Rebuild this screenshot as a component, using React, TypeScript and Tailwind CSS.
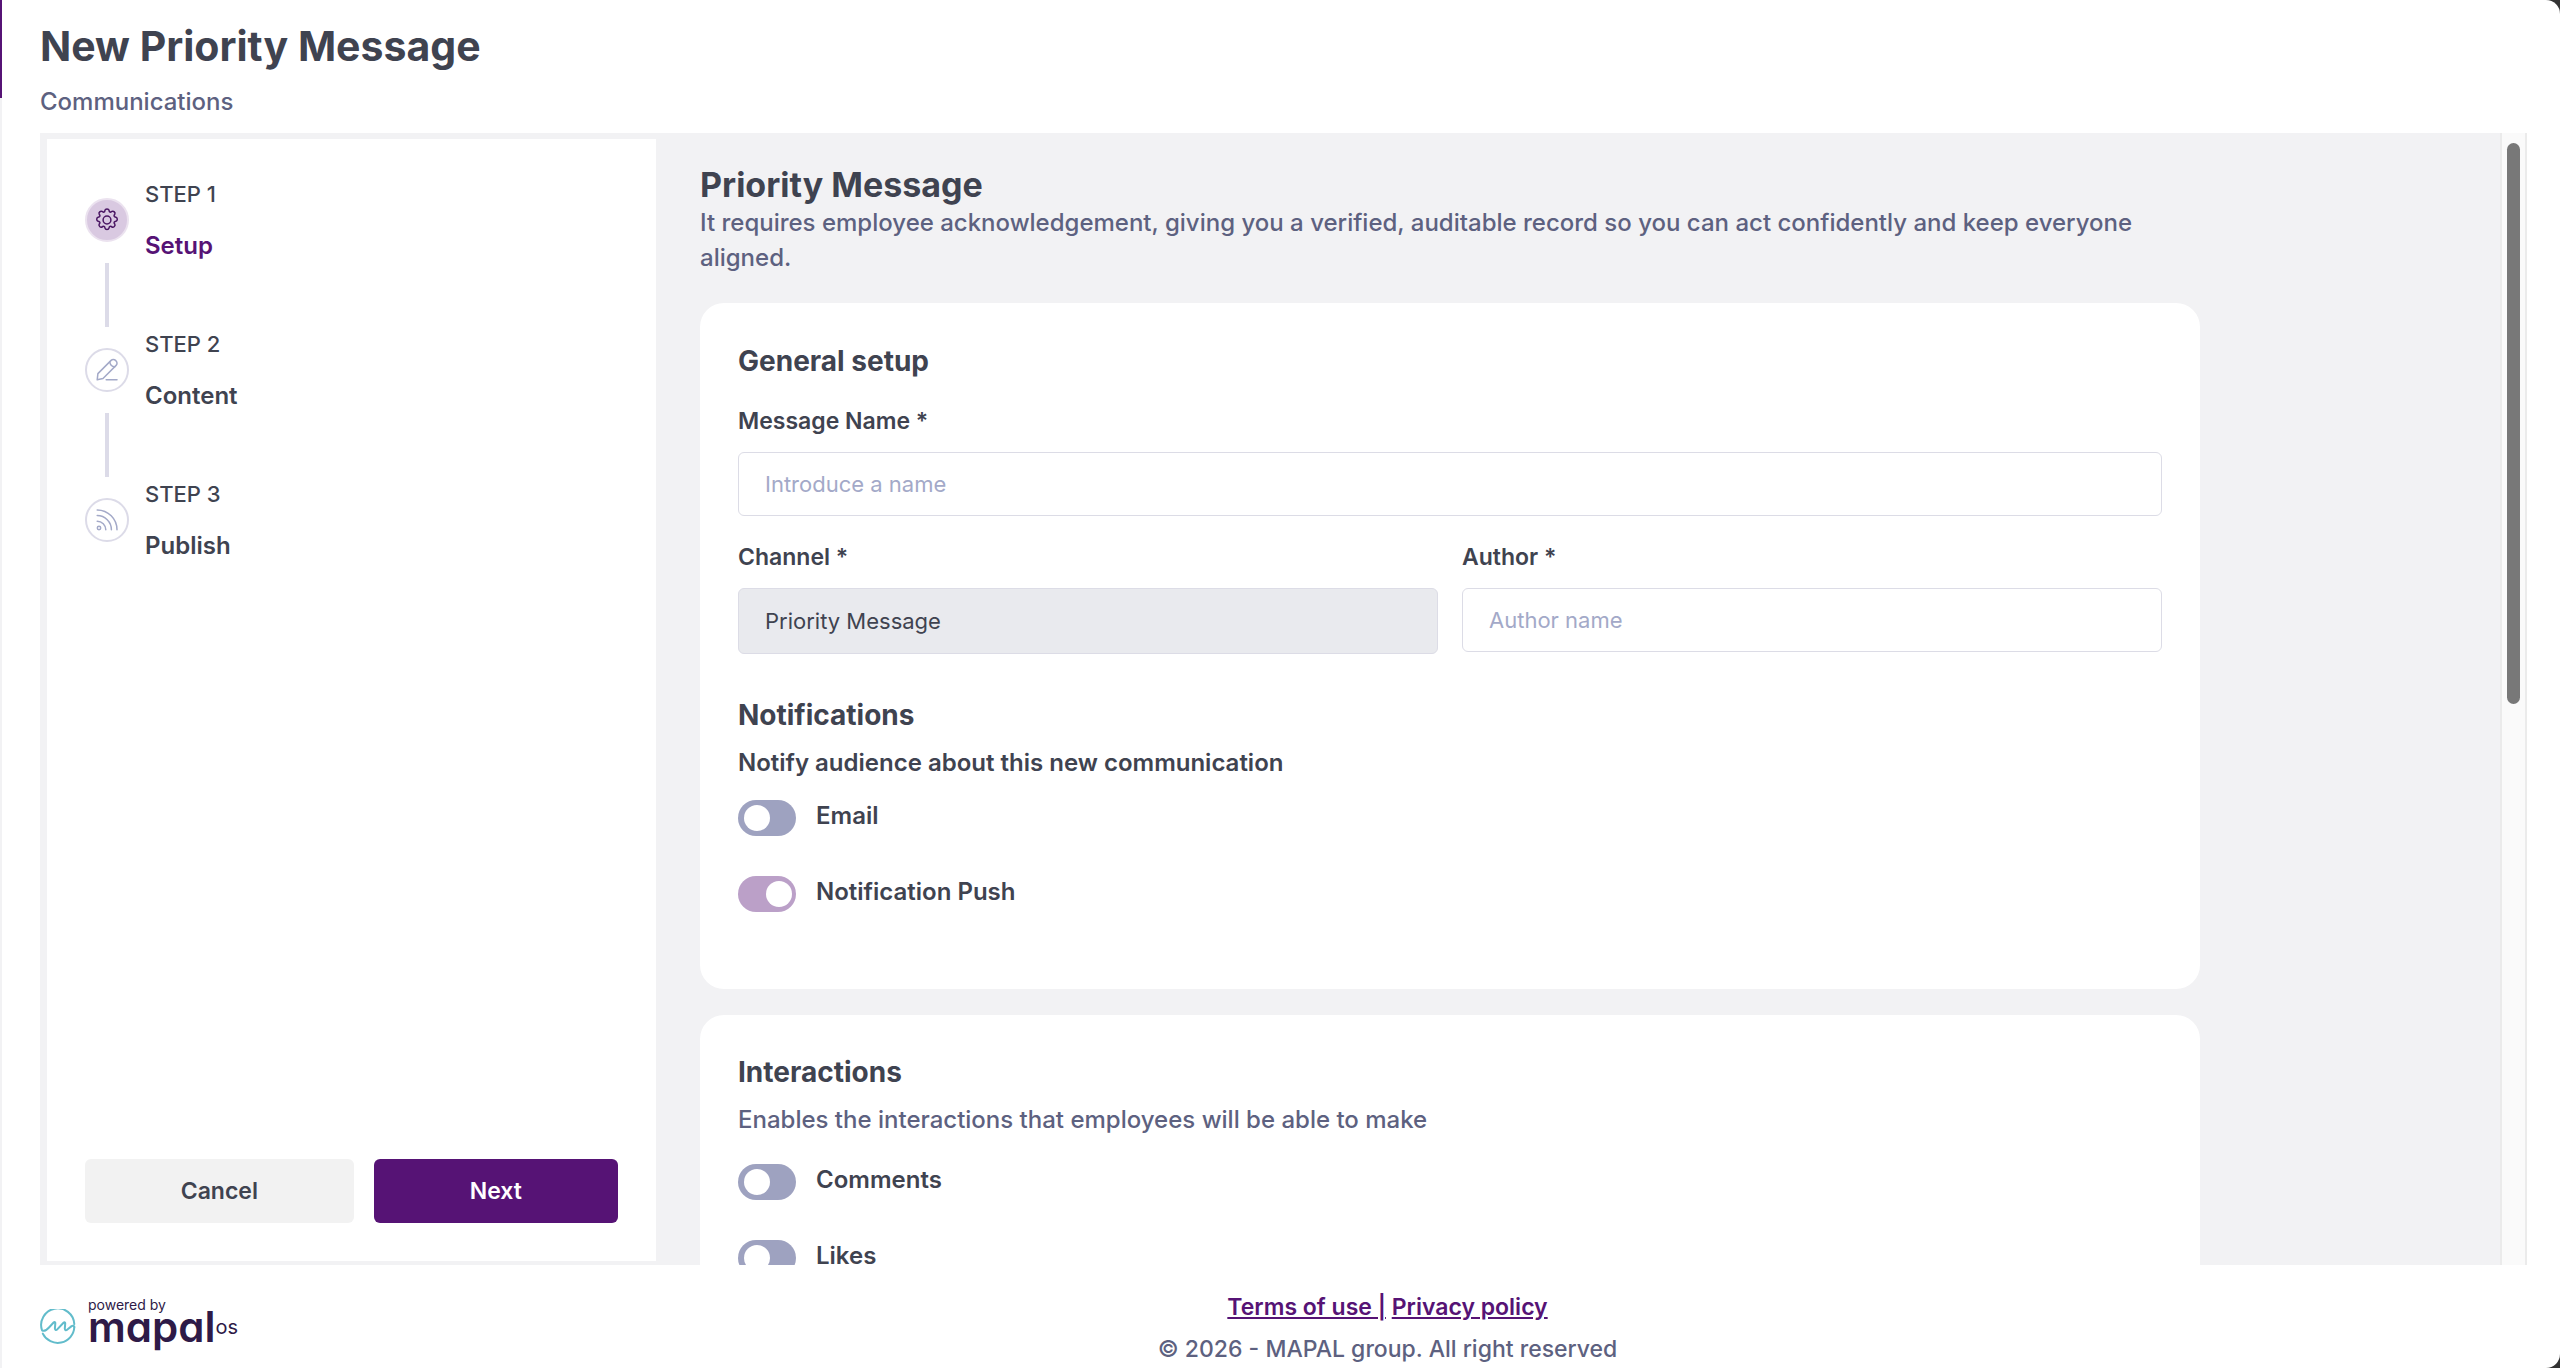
import type { ReactNode } from "react";

function GearIcon() {
  return (
    <svg viewBox="0 0 24 24" className="size-6" fill="none" stroke="#4a1663" strokeWidth="1.5" strokeLinejoin="round" aria-hidden="true">
      <path d="M10 2.2C10.4.5 13.6.5 14 2.2l.2.9c.2.9 1.200 1.300 2 .8l.8-.5c1.500-.9 3.700 1.300 2.800 2.800l-.5.8c-.5.800-.1 1.800.8 2l.9.2c1.700.4 1.700 3.600 0 4l-.9.200c-.9.200-1.300 1.200-.8 2l.5.8c.9 1.500-1.300 3.700-2.800 2.800l-.8-.5c-.8-.5-1.800-.1-2 .8l-.2.9c-.4 1.700-3.600 1.700-4 0l-.2-.9c-.2-.9-1.200-1.300-2-.8l-.8.5c-1.500.9-3.700-1.300-2.800-2.800l.5-.8c.5-.8.1-1.800-.8-2l-.9-.2c-1.700-.4-1.700-3.600 0-4l.9-.2c.9-.2 1.300-1.200.8-2l-.5-.8C3.300 4.700 5.500 2.500 7 3.400l.8.5c.8.5 1.800.1 2-.8z" />
      <circle cx="12" cy="12" r="3.900" />
    </svg>
  );
}

function PencilIcon() {
  return (
    <svg viewBox="0 0 24 24" className="size-6" fill="none" stroke="#a3a9c8" strokeWidth="1.5" strokeLinecap="round" strokeLinejoin="round" aria-hidden="true">
      <path d="M2.200 21.800l.7-6.200L16.100 2.400a3.100 3.100 0 0 1 4.400 0l.6.600a3.100 3.100 0 0 1 0 4.400L8 20.500z" />
      <path d="M14.800 3.800c.2 2.900 2 4.700 4.900 5" />
      <path d="M11.200 21.800H22" />
    </svg>
  );
}

function FeedIcon() {
  return (
    <svg viewBox="0 0 24 24" className="size-6" fill="none" stroke="#a3a9c8" strokeWidth="1.5" strokeLinecap="round" aria-hidden="true">
      <circle cx="4" cy="20" r="1.700" />
      <path d="M2.200 13.200a8.600 8.600 0 0 1 8.600 8.600" />
      <path d="M2.200 7.600a14.200 14.200 0 0 1 14.200 14.200" />
      <path d="M2.200 2A19.800 19.800 0 0 1 22 21.800" />
    </svg>
  );
}

function Step({ label, title, icon, active, last }: { label: string; title: string; icon: ReactNode; active?: boolean; last?: boolean }) {
  return (
    <li className="flex h-[150px] gap-4" aria-current={active ? "step" : undefined}>
      <div className="flex w-11 flex-col items-center pt-5">
        <span className={active ? "flex size-11 items-center justify-center rounded-full border-2 border-[#ebe2ef] bg-[#d9c9e1]" : "flex size-11 items-center justify-center rounded-full border-2 border-[#dcdbe8]"}>
          {icon}
        </span>
        {!last && <span className="mt-[21px] h-16 w-1 bg-[#dcdbe8]" />}
      </div>
      <div className="flex flex-col gap-5">
        <span className="text-[22px] leading-8 font-medium">{label}</span>
        <span className={active ? "text-2xl leading-8 font-semibold text-[#561375]" : "text-2xl leading-8 font-semibold"}>{title}</span>
      </div>
    </li>
  );
}

function Field({ id, label, placeholder, value }: { id: string; label: string; placeholder?: string; value?: string }) {
  return (
    <div className="flex flex-col gap-[15px]">
      <label htmlFor={id} className="text-[23px] leading-8 font-semibold">
        {label}
      </label>
      {value ? (
        <input id={id} type="text" defaultValue={value} disabled className="h-[66px] w-full rounded-md border border-[#dcdce6] bg-[#e9eaee] px-[26px] text-[22px] text-[#3f4350]" />
      ) : (
        <input id={id} type="text" placeholder={placeholder} className="h-16 w-full rounded-md border border-[#dcdce6] bg-white px-[26px] text-[22px] placeholder:text-[#a3a9c8]" />
      )}
    </div>
  );
}

function Toggle({ id, label, on }: { id: string; label: string; on?: boolean }) {
  return (
    <div className="flex h-9 items-start gap-5">
      <input
        id={id}
        type="checkbox"
        role="switch"
        defaultChecked={on}
        disabled={on}
        className="flex h-9 w-[58px] shrink-0 appearance-none items-center rounded-full bg-[#9ea2c0] px-1.5 before:block before:size-[26px] before:rounded-full before:bg-white checked:justify-end checked:bg-[#bba0c8] checked:px-1"
      />
      <label htmlFor={id} className="text-2xl leading-8 font-semibold">
        {label}
      </label>
    </div>
  );
}

function Logo() {
  return (
    <div className="flex w-[208px] shrink-0 items-start gap-3 text-[#2e1a47]">
      <svg viewBox="0 0 36 36" className="mt-11 size-9 shrink-0" fill="none" stroke="#62bccb" strokeWidth="2" strokeLinecap="round" strokeLinejoin="round" aria-hidden="true">
        <path d="M34.300 15A16.600 16.600 0 1 0 2 21.300c2.500 1.600 5-.6 7-2.800l4.600-5c1-1 1.900-.5 1.700.8l-.4 5c0 2 1.300 2.200 2.600.8l6-6.300c1-1 1.900-.5 1.700.8l-.4 5c0 2 1.300 2.100 2.600.9l4.200-3.400c1.200-.8 2.600-.6 2.700.9" />
        <path d="M34.300 18A16.600 16.600 0 0 1 2.800 24.600" />
      </svg>
      <div className="flex flex-col pt-8">
        <span className="text-sm leading-4">powered by</span>
        <span className="flex items-start">
          <span className="text-[42px] leading-7 font-semibold [font-feature-settings:'cv11']">mapal</span>
          <span className="pt-0.5 text-xl leading-6">os</span>
        </span>
      </div>
    </div>
  );
}

export default function App() {
  return (
    <div className="bg-[#333333] font-['Inter',sans-serif] text-[#3f4350]">
      <div className="flex h-screen flex-col overflow-hidden rounded-r-[14px] bg-white">
        <div className="flex min-h-0 flex-1">
          <div className="flex w-0.5 shrink-0 flex-col bg-[#f2f2f4]">
            <span className="h-[98px] bg-[#561375]" />
          </div>
          <div className="flex min-w-0 flex-1 flex-col pr-[33px] pl-[38px]">
            <header className="pt-[22px] pb-[15px]">
              <h1 className="text-[41px] leading-[48px] font-bold">New Priority Message</h1>
              <p className="mt-4 text-2xl leading-8 font-medium text-[#5d6180]">Communications</p>
            </header>

            <div className="flex min-h-0 flex-1 bg-[#f2f2f4]">
              <aside className="mt-1.5 mb-1 ml-[7px] flex w-[609px] shrink-0 flex-col justify-between bg-white px-[38px] pt-[39px] pb-[38px]">
                <ol>
                  <Step label="STEP 1" title="Setup" icon={<GearIcon />} active />
                  <Step label="STEP 2" title="Content" icon={<PencilIcon />} />
                  <Step label="STEP 3" title="Publish" icon={<FeedIcon />} last />
                </ol>
                <div className="grid grid-cols-[11fr_10fr] gap-5 text-[23px] font-semibold">
                  <button type="button" className="h-16 rounded-md bg-[#f2f2f2]">
                    Cancel
                  </button>
                  <button type="button" className="h-16 rounded-md bg-[#561375] text-white">
                    Next
                  </button>
                </div>
              </aside>

              <main className="min-w-0 flex-1 overflow-hidden pt-8 pl-11">
                <div className="w-5/6">
                  <h2 className="text-[34px] leading-10 font-bold">Priority Message</h2>
                  <p className="text-2xl leading-[35px] font-medium text-[#5d6180]">
                    It requires employee acknowledgement, giving you a verified, auditable record so you can act confidently and keep everyone aligned.
                  </p>

                  <section className="mt-7 rounded-3xl bg-white px-[38px] pt-[38px] pb-[77px]">
                    <h3 className="text-[28px] leading-10 font-bold">General setup</h3>
                    <div className="mt-6 grid grid-cols-2 gap-x-6 gap-y-[25px]">
                      <div className="col-span-2">
                        <Field id="message-name" label="Message Name *" placeholder="Introduce a name" />
                      </div>
                      <Field id="channel" label="Channel *" value="Priority Message" />
                      <Field id="author" label="Author *" placeholder="Author name" />
                    </div>
                    <h3 className="mt-[41px] text-[28px] leading-10 font-bold">Notifications</h3>
                    <p className="mt-3 text-2xl leading-8 font-semibold">Notify audience about this new communication</p>
                    <div className="mt-[21px] flex flex-col gap-10">
                      <Toggle id="email" label="Email" />
                      <Toggle id="push" label="Notification Push" on />
                    </div>
                  </section>

                  <section className="mt-[26px] rounded-3xl bg-white px-[38px] pt-[37px] pb-[77px]">
                    <h3 className="text-[28px] leading-10 font-bold">Interactions</h3>
                    <p className="mt-3 text-2xl leading-8 font-medium text-[#5d6180]">Enables the interactions that employees will be able to make</p>
                    <div className="mt-7 flex flex-col gap-10">
                      <Toggle id="comments" label="Comments" />
                      <Toggle id="likes" label="Likes" />
                    </div>
                  </section>
                </div>
              </main>

              <div className="flex w-[27px] shrink-0 justify-center border-x-2 border-[#ebebeb] bg-[#fafafa] pt-2.5" aria-hidden="true">
                <span className="h-1/2 w-[13px] rounded-full bg-[#787878]" />
              </div>
            </div>

            <footer className="flex h-[103px] shrink-0">
              <Logo />
              <div className="flex flex-1 flex-col items-center gap-[10px] pt-[26px] text-[23px] leading-8">
                <p className="font-semibold text-[#561375]">
                  <a href="#terms" className="underline">
                    Terms of use |
                  </a>{" "}
                  <a href="#privacy" className="underline">
                    Privacy policy
                  </a>
                </p>
                <p className="font-medium text-[#5d6180]">© 2026 - MAPAL group. All right reserved</p>
              </div>
            </footer>
          </div>
        </div>
      </div>
    </div>
  );
}
